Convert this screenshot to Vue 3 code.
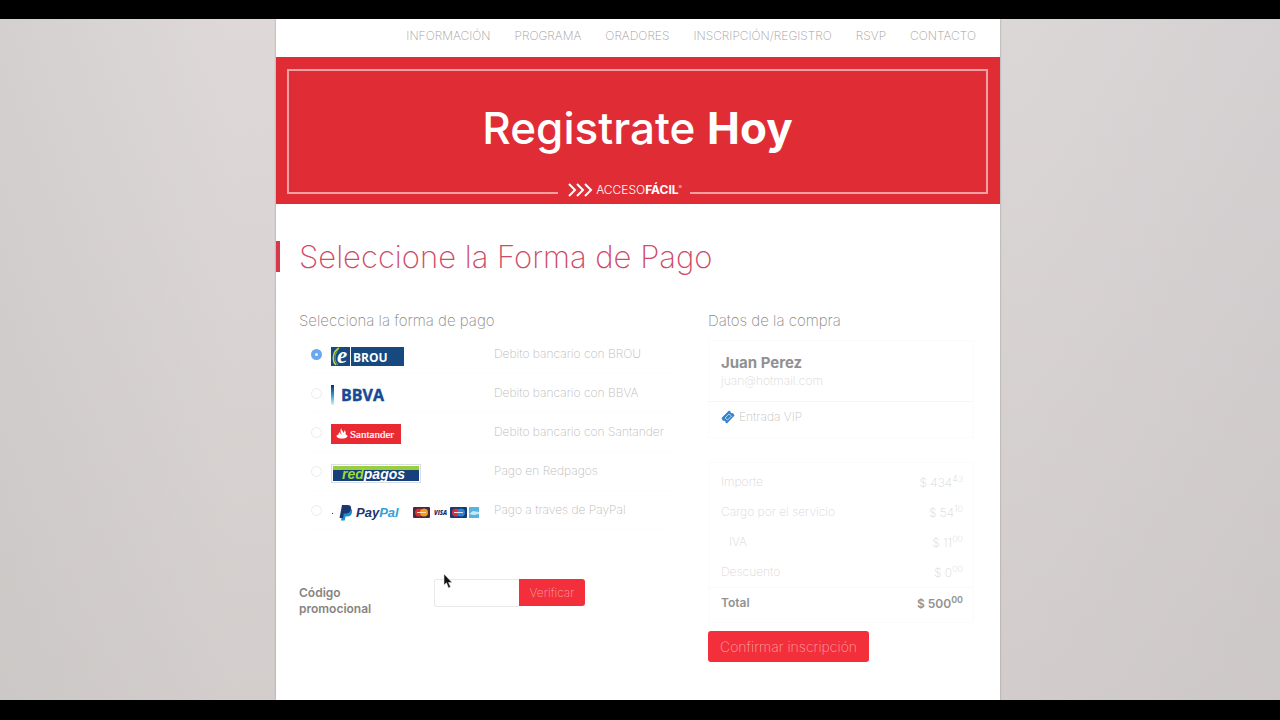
<script setup>
import { ref } from 'vue'

const nav = ['INFORMACIÓN', 'PROGRAMA', 'ORADORES', 'INSCRIPCIÓN/REGISTRO', 'RSVP', 'CONTACTO']
const methods = [
  { id: 'brou', label: 'Debito bancario con BROU' },
  { id: 'bbva', label: 'Debito bancario con BBVA' },
  { id: 'santander', label: 'Debito bancario con Santander' },
  { id: 'redpagos', label: 'Pago en Redpagos' },
  { id: 'paypal', label: 'Pago a traves de PayPal' },
]
const selected = ref('brou')
const code = ref('')
const costs = [
  { name: 'Importe', amount: '434', cents: '43' },
  { name: 'Cargo por el servicio', amount: '54', cents: '10' },
  { name: 'IVA', amount: '11', cents: '00', sub: true },
  { name: 'Descuento', amount: '0', cents: '00' },
]
</script>

<template>
  <div class="stage">
    <div class="page">
      <nav class="nav">
        <a v-for="item in nav" :key="item" href="#">{{ item }}</a>
      </nav>

      <header class="banner">
        <div class="frame">
          <h1>Registrate <b>Hoy</b></h1>
          <div class="frame-foot">
            <span class="rule rule-left"></span>
            <span class="brand">
              <svg width="26" height="14" viewBox="0 0 26 14" fill="none" stroke="#fff" stroke-width="2" aria-hidden="true">
                <path d="M1 1l6 6-6 6M9 1l6 6-6 6M17 1l6 6-6 6" />
              </svg>
              <span>ACCESO<b>FÁCIL</b><sup>®</sup></span>
            </span>
            <span class="rule rule-right"></span>
          </div>
        </div>
      </header>

      <h2 class="title">Seleccione la Forma de Pago</h2>

      <main class="columns">
        <section>
          <h3>Selecciona la forma de pago</h3>
          <div class="methods">
            <div v-for="m in methods" :key="m.id" class="method">
              <input :id="m.id" v-model="selected" type="radio" name="method" :value="m.id" />
              <label :for="m.id" class="logo" :aria-label="m.label">
                <svg v-if="m.id === 'brou'" width="73" height="19" viewBox="0 0 73 19">
                  <rect width="73" height="19" fill="#15497f" />
                  <path d="M5 18C1 14 1 5 8 1" fill="none" stroke="#c8d147" stroke-width="1.5" />
                  <path d="M7 18C3 14 3 8 7 3" fill="none" stroke="#7da84c" />
                  <text x="6" y="16" class="serif" font-size="23" font-weight="700" font-style="italic" fill="#fff">e</text>
                  <path d="M19.500 0v19" stroke="#fff" />
                  <text x="22" y="15" class="humanist" font-size="12" font-weight="700" fill="#fff">BROU</text>
                </svg>
                <svg v-else-if="m.id === 'bbva'" width="60" height="22" viewBox="0 0 60 22">
                  <defs>
                    <linearGradient id="bar" x1="0" y1="0" x2="0" y2="1">
                      <stop offset="0" stop-color="#0b2f6f" />
                      <stop offset=".5" stop-color="#2a9bd4" />
                      <stop offset="1" stop-color="#d8f1fa" />
                    </linearGradient>
                  </defs>
                  <rect width="3" height="20" y="1" fill="url(#bar)" />
                  <text x="10" y="17" class="humanist" font-size="16" font-weight="700" fill="#164a94" stroke="#164a94" stroke-width=".4">BBVA</text>
                </svg>
                <svg v-else-if="m.id === 'santander'" width="70" height="20" viewBox="0 0 70 20">
                  <rect width="70" height="20" fill="#ea2a33" />
                  <path d="M10.500 4c-1 2 2 3 2 5 1-1 1-2 .5-3 2 1 2 3 1.500 4.500 2 .5 2.500 1.500 1.500 2.500-2 2-8 2-10 0-1-1-.5-2 1.500-2.500 0-1 .5-2 1.500-2.500 0 1 1 2 1.500 3C11 9 8 7 10.500 4z" fill="#fff" />
                  <text x="19" y="14" class="serif" font-size="11" fill="#fff" stroke="#fff" stroke-width=".2">Santander</text>
                </svg>
                <svg v-else-if="m.id === 'redpagos'" width="90" height="19" viewBox="0 0 90 19">
                  <rect x=".5" y=".5" width="89" height="18" fill="#fff" stroke="#b5bbc4" stroke-dasharray="1 1" />
                  <rect x="2" y="2" width="86" height="4" fill="#98cf3c" />
                  <rect x="2" y="6" width="86" height="11" fill="#173f7c" />
                  <path d="M2 6h34l-2 8H2z" fill="#173f7c" />
                  <text x="11" y="15" class="sans" font-size="14" font-weight="700" font-style="italic" fill="#9cdb35">red<tspan fill="#fff">pagos</tspan></text>
                </svg>
                <svg v-else width="149" height="19" viewBox="0 0 149 19">
                  <rect x="1" y="10" width="1" height="1" fill="#333" />
                  <path d="M12 5h5.500c3 0 4 2 3.500 4.500-.6 3-2.500 4-5 4h-1.500l-.8 4H10z" fill="#1b8fcf" />
                  <path d="M11 2h5.500c3 0 4 1.500 3.500 4-.6 3-2.500 4.500-5.500 4.500h-1.700l-.8 4.500H8.500z" fill="#1d3672" />
                  <text x="25" y="14" class="sans" font-size="13" font-weight="700" font-style="italic" fill="#26326e">Pay<tspan fill="#35a0d8">Pal</tspan></text>
                  <rect x="82" y="4" width="17" height="11" rx="1" fill="#4b2746" />
                  <circle cx="88" cy="9.500" r="4" fill="#dd2c2c" />
                  <circle cx="93" cy="9.500" r="4" fill="#f39c1e" />
                  <path d="M86 9.500h9" stroke="#fbe3b8" />
                  <text x="103" y="12" class="humanist" font-size="6" font-weight="800" font-style="italic" fill="#252c66">VISA</text>
                  <rect x="119" y="4" width="17" height="11" rx="1" fill="#173a75" />
                  <circle cx="125" cy="9.500" r="4" fill="#dd2c3c" />
                  <circle cx="130" cy="9.500" r="4" fill="#2b87cf" />
                  <path d="M123 9.500h9" stroke="#e5dcf0" />
                  <rect x="138" y="4" width="10" height="11" fill="#58b4dc" />
                  <path d="M138 11l4-3 6 1v2l-5 1z" fill="#c9e9f5" />
                </svg>
              </label>
              <label :for="m.id" class="method-name">{{ m.label }}</label>
            </div>
          </div>

          <form class="promo" @submit.prevent>
            <label for="promo">Código promocional</label>
            <div class="promo-field">
              <input id="promo" v-model="code" type="text" />
              <button type="submit">Verificar</button>
              <svg class="pointer" width="10" height="16" viewBox="0 0 10 16" aria-hidden="true">
                <path d="M1 1v11l2.500-2.200L5.500 15l2-1-2-4.500H9z" fill="#111" stroke="#ddd" stroke-width=".6" />
              </svg>
            </div>
          </form>
        </section>

        <section>
          <h3>Datos de la compra</h3>
          <div class="card buyer">
            <div class="person">
              <strong>Juan Perez</strong>
              <span>juan@hotmail.com</span>
            </div>
            <p class="ticket">
              <svg width="14" height="14" viewBox="0 0 14 14" aria-hidden="true">
                <path d="M.5 8L8 .5l1.500 1c0 1.500 1 2 2.500 1.500l1.500 2.500L6 13.500l-1.500-1c0-1.500-1-2-2.500-1.500z" fill="#3584c9" />
                <path d="M4 8l4-4 2.500 2-4 4z" fill="#3584c9" stroke="#d5eafa" stroke-width=".8" />
              </svg>
              Entrada VIP
            </p>
          </div>
          <table class="card costs">
            <tbody>
              <tr v-for="c in costs" :key="c.name" :class="{ sub: c.sub }">
                <th scope="row">{{ c.name }}</th>
                <td>$ {{ c.amount }}<sup>{{ c.cents }}</sup></td>
              </tr>
            </tbody>
            <tfoot>
              <tr>
                <th scope="row">Total</th>
                <td>$ 500<sup>00</sup></td>
              </tr>
            </tfoot>
          </table>
          <button type="button" class="confirm">Confirmar inscripción</button>
        </section>
      </main>
    </div>
  </div>
</template>

<style>
body {
  background: #000;
}
</style>

<style scoped>
.stage {
  box-sizing: border-box;
  min-height: 100vh;
  display: flex;
  justify-content: center;
  padding-right: 4px;
  border-top: 19px solid #000;
  border-bottom: 20px solid #000;
  background:
    linear-gradient(rgba(190, 184, 182, 0), rgba(190, 184, 182, 0.35)),
    linear-gradient(90deg, #d3d0cf, #ded9d8 18%, #dcd7d7 80%, #d5d0d1);
  font-family: Inter, "Liberation Sans", sans-serif;
  font-weight: 300;
  color: #999;
}
.page {
  width: 100%;
  max-width: 724px;
  background: #fff;
  box-shadow: 0 0 2px #9a9492;
  clip-path: inset(0 -3px);
}
.nav {
  display: flex;
  flex-wrap: wrap;
  justify-content: flex-end;
  gap: 8px 24px;
  padding: 9px 24px 13px;
  font-size: 12px;
  line-height: 16px;
}
.nav a {
  color: #a59a9e;
  font-weight: 200;
  text-decoration: none;
}
.banner {
  background: #e02d35;
  color: #fff;
  padding: 12px 12px 10px 11px;
}
.frame {
  position: relative;
  height: 125px;
  box-sizing: border-box;
  border: 2px solid #efa0a3;
  border-bottom: 0;
}
.frame h1 {
  margin: 0;
  padding-top: 31px;
  text-align: center;
  font-size: 44px;
  line-height: 52px;
  font-weight: 500;
}
.frame b {
  font-weight: 700;
}
.frame-foot {
  position: absolute;
  left: 0;
  right: 0;
  bottom: 0;
  display: flex;
  align-items: flex-end;
}
.rule {
  height: 2px;
  background: #efa0a3;
}
.rule-left {
  flex: 10 1 0;
}
.rule-right {
  flex: 11 1 0;
}
.brand {
  display: flex;
  align-items: center;
  gap: 2px;
  padding: 0 8px 0 10px;
  margin-bottom: -4px;
  font-size: 12px;
  line-height: 16px;
}
.brand sup {
  font-size: 5px;
  line-height: 5px;
}
.title {
  margin: 37px 0 0;
  border-left: 4px solid #d8384c;
  padding-left: 19px;
  font-size: 31px;
  line-height: 31px;
  font-weight: 200;
  color: #cf4a66;
}
.columns {
  display: grid;
  grid-template-columns: 370fr 266fr;
  column-gap: 39px;
  padding: 39px 26px 24px 23px;
}
h3 {
  margin: 0;
  font-size: 15px;
  line-height: 20px;
  font-weight: 200;
  color: #888;
}
.methods {
  margin-top: 4px;
  padding-left: 12px;
}
.method {
  display: grid;
  grid-template-columns: 20px 163px 1fr;
  align-items: center;
  height: 39px;
  box-sizing: border-box;
  border-bottom: 1px solid #fcfcfc;
}
.method input {
  appearance: none;
  box-sizing: border-box;
  width: 11px;
  height: 11px;
  margin: 0;
  border: 1px solid #ececec;
  border-radius: 50%;
  background: #fff;
}
.method input:checked {
  border: 4px solid #69a8ee;
  background: #eef6ff;
}
.logo {
  padding-top: 4px;
}
.logo svg {
  display: block;
  overflow: visible;
}
.serif {
  font-family: "Liberation Serif", serif;
}
.sans {
  font-family: "Liberation Sans", sans-serif;
}
.humanist {
  font-family: "Open Sans", "Noto Sans", sans-serif;
}
.method-name {
  font-size: 12px;
  line-height: 16px;
  font-weight: 200;
  color: #bbb;
  white-space: nowrap;
}
.promo {
  display: grid;
  grid-template-columns: 90px auto;
  column-gap: 45px;
  justify-content: start;
  margin-top: 49px;
}
.promo > label {
  padding-top: 6px;
  font-size: 12px;
  line-height: 16px;
  font-weight: 600;
  color: #888480;
}
.promo-field {
  position: relative;
  display: flex;
  height: 28px;
}
.promo-field input {
  box-sizing: border-box;
  width: 85px;
  border: 1px solid #e9e9e9;
  border-right: 0;
  border-radius: 3px 0 0 3px;
  background: #fff;
}
.promo-field button {
  width: 66px;
  height: 27px;
  padding: 0;
  border-radius: 0 3px 3px 0;
  font-size: 12px;
}
button {
  border: 0;
  background: #f22f3b;
  color: #f9a3a6;
  font-family: inherit;
  font-weight: 200;
}
.pointer {
  position: absolute;
  left: 9px;
  top: -6px;
}
.card {
  box-sizing: border-box;
  width: 100%;
  border: 1px solid #fbfbfb;
}
.buyer {
  margin-top: 9px;
}
.person {
  display: flex;
  flex-direction: column;
  padding: 12px;
  border-bottom: 1px solid #f5f5f5;
}
.person strong {
  font-size: 15px;
  line-height: 20px;
  font-weight: 700;
  color: #919191;
}
.person span {
  font-size: 12px;
  line-height: 16px;
  font-weight: 200;
  color: #d8d8d8;
}
.ticket {
  display: flex;
  align-items: center;
  gap: 4px;
  margin: 0;
  padding: 7px 12px 12px;
  font-size: 12px;
  line-height: 16px;
  font-weight: 200;
  color: #c4c4c4;
}
.costs {
  margin-top: 24px;
  border-collapse: separate;
  border-spacing: 0;
  font-size: 12px;
  line-height: 16px;
  color: #d8d8d8;
}
.costs th,
.costs td {
  height: 30px;
  box-sizing: border-box;
  padding: 0 12px;
  font-weight: 200;
  text-align: left;
}
.costs td {
  padding-right: 10px;
  text-align: right;
}
.costs .sub th {
  padding-left: 20px;
}
.costs sup {
  font-size: 9px;
  line-height: 9px;
}
.costs tbody tr:first-child > * {
  height: 34px;
  padding-top: 4px;
}
.costs tfoot th,
.costs tfoot td {
  height: 35px;
  padding-bottom: 4px;
  border-top: 1px solid #fafafa;
  font-weight: 600;
  color: #929292;
}
.confirm {
  margin-top: 8px;
  height: 31px;
  padding: 0 12px;
  border-radius: 3px;
  font-size: 14px;
}
</style>
